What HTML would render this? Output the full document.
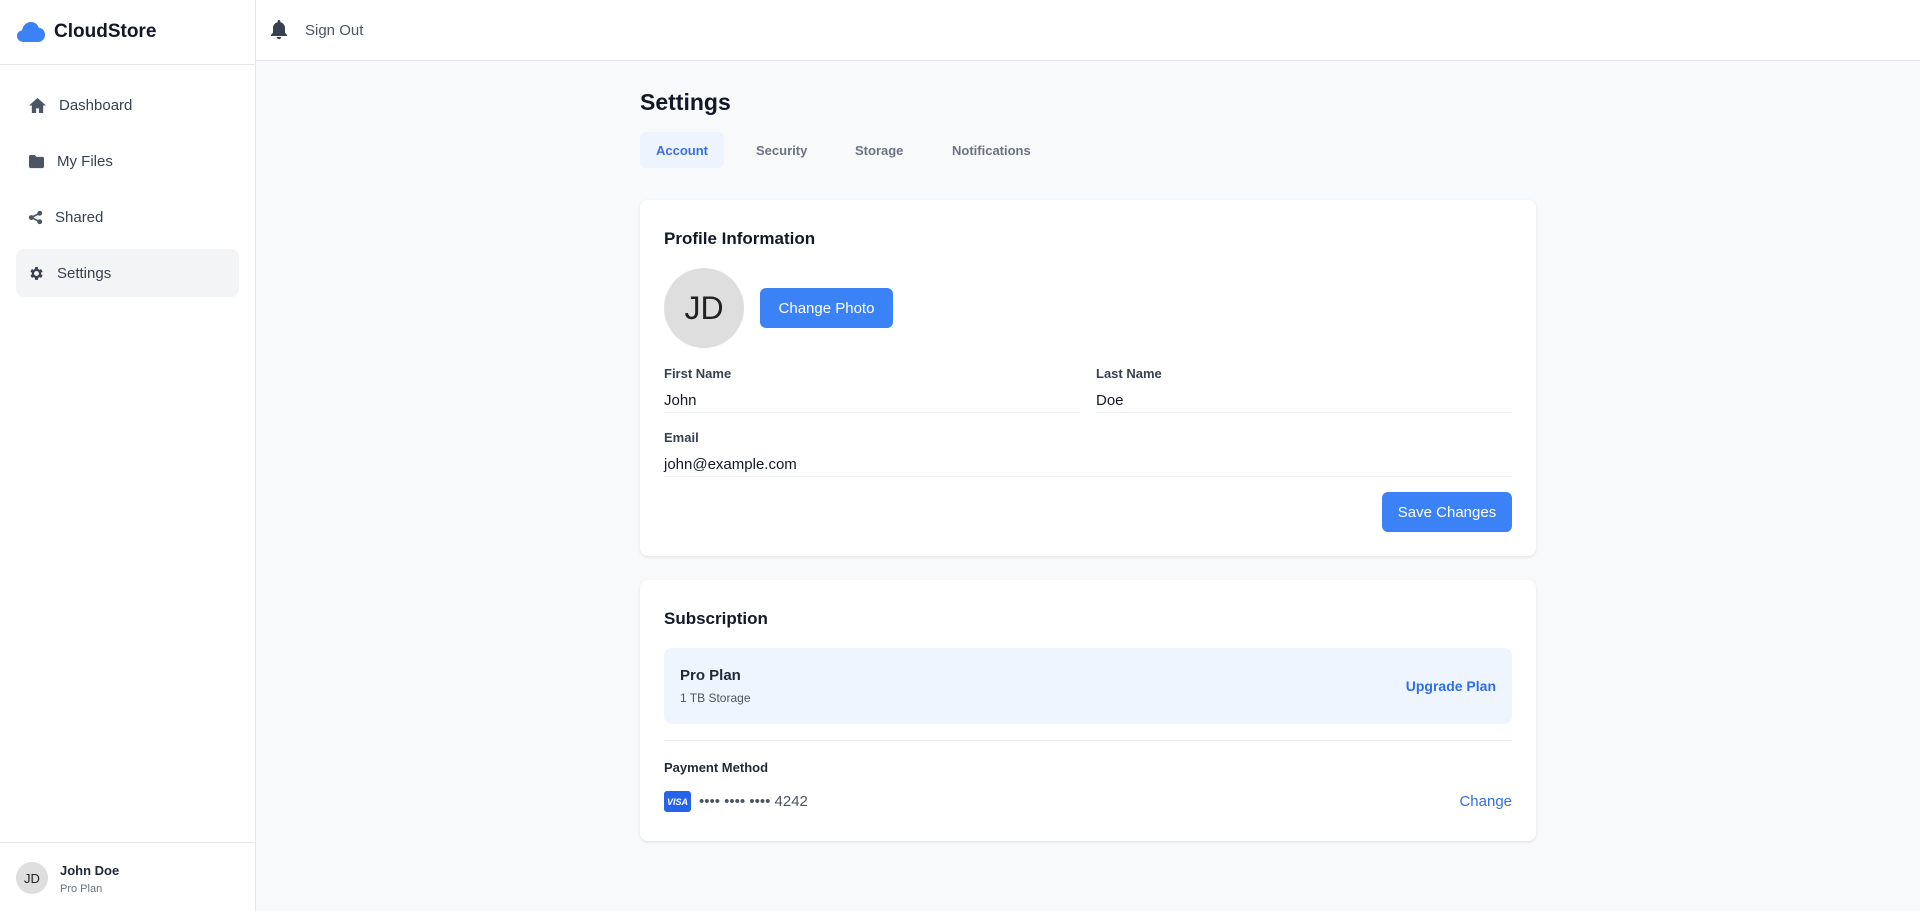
<!DOCTYPE html>
<html><head><meta charset="utf-8"><style>
*{box-sizing:border-box;margin:0;padding:0}
body{width:1920px;height:911px;overflow:hidden;font-family:"Liberation Sans",sans-serif;background:#f8f9fb;color:#111827;position:relative}
.side{position:absolute;left:0;top:0;width:256px;height:911px;background:#fff;border-right:1px solid #e5e7eb}
.logo{height:65px;border-bottom:1px solid #e5e7eb;display:flex;align-items:center;padding-left:16px;font-weight:bold;font-size:19px;color:#111827}
.logo svg{margin-right:8px}
.nav{position:absolute;left:16px;width:223px;height:48px;border-radius:8px;display:flex;align-items:center;padding-left:12px;font-size:15px;color:#374151}
.nav svg{margin-right:12px}
.nav.act{background:#f3f4f6}
.foot{position:absolute;left:0;bottom:0;width:255px;height:69px;border-top:1px solid #e5e7eb}
.av{position:absolute;border-radius:50%;background:#dedede;display:flex;align-items:center;justify-content:center;color:#222}
.top{position:absolute;left:256px;top:0;right:0;height:61px;background:#fff;border-bottom:1px solid #e5e7eb}
.card{position:absolute;left:640px;width:896px;background:#fff;border-radius:8px;box-shadow:0 1px 3px rgba(0,0,0,.1)}
.abs{position:absolute}
.lbl{font-size:13px;font-weight:bold;color:#374151}
.val{font-size:15px;color:#111827}
.line{position:absolute;height:1px;background:#eceef1}
.btn{position:absolute;background:#3b82f6;color:#fff;border-radius:6px;display:flex;align-items:center;justify-content:center;font-size:15px}
</style></head><body>
<div class="side">
 <div class="logo"><svg width="30" height="22" viewBox="0 0 30 22"><path d="M8 21C3.5 21 1 18 1 15c0-3 2.2-5.3 5-5.6C6.8 4.7 10.5 1 15 1c3.8 0 6.8 2.4 7.8 5.8 3.8.3 6.2 3.3 6.2 6.9 0 4-3 7.3-7 7.3z" fill="#3b82f6"/></svg>CloudStore</div>
 <div class="nav" style="top:81px"><svg width="19" height="17" viewBox="0 0 20 18"><path d="M10 1L1 9h3v8h4.5v-5h3v5H16V9h3z" fill="#4b5563"/></svg>Dashboard</div>
 <div class="nav" style="top:137px"><svg width="17" height="15" viewBox="0 0 18 16"><path d="M1 2.5C1 1.7 1.7 1 2.5 1h4.5l2 2h6.5c.8 0 1.5.7 1.5 1.5v9c0 .8-.7 1.5-1.5 1.5h-13C1.7 15 1 14.3 1 13.5z" fill="#4b5563"/></svg>My Files</div>
 <div class="nav" style="top:193px"><svg width="15" height="15" viewBox="0 0 16 16"><circle cx="12.5" cy="3.5" r="2.6" fill="#4b5563"/><circle cx="12.5" cy="12.5" r="2.6" fill="#4b5563"/><circle cx="3.5" cy="8" r="2.6" fill="#4b5563"/><path d="M3.5 8L12.5 3.5M3.5 8l9 4.5" stroke="#4b5563" stroke-width="1.8"/></svg>Shared</div>
 <div class="nav act" style="top:249px"><svg width="17" height="17" viewBox="0 0 24 24"><path fill="#374151" d="M19.4 13a7.5 7.5 0 000-2l2.1-1.6-2-3.5-2.5 1a7.6 7.6 0 00-1.7-1L15 3h-4l-.4 2.9a7.6 7.6 0 00-1.7 1l-2.5-1-2 3.5L6.6 11a7.5 7.5 0 000 2l-2.1 1.6 2 3.5 2.5-1c.5.4 1.1.7 1.7 1L11 21h4l.4-2.9c.6-.3 1.2-.6 1.7-1l2.5 1 2-3.5zM13 15.5a3.5 3.5 0 110-7 3.5 3.5 0 010 7z" transform="translate(-1 0)"/></svg>Settings</div>
 <div class="foot">
  <div class="av" style="left:16px;top:19px;width:32px;height:32px;font-size:13px">JD</div>
  <div class="abs" style="left:60px;top:20px;font-size:13px;font-weight:bold;color:#1f2937">John Doe</div>
  <div class="abs" style="left:60px;top:40px;font-size:11px;color:#6b7280">Pro Plan</div>
 </div>
</div>
<div class="top">
 <svg class="abs" style="left:14px;top:19px" width="18" height="21" viewBox="0 0 18 21"><path d="M9 1c.8 0 1.4.6 1.4 1.4v.8c2.8.6 4.6 3 4.6 5.8v4.5l2 2.5v1H1v-1l2-2.5V9c0-2.8 1.8-5.2 4.6-5.8v-.8C7.6 1.6 8.2 1 9 1zM6.8 18h4.4a2.2 2.2 0 01-4.4 0z" fill="#374151"/></svg>
 <div class="abs" style="left:49px;top:22px;font-size:15px;color:#4b5563">Sign Out</div>
</div>
<div class="abs" style="left:640px;top:89px;font-size:23px;font-weight:bold;color:#111827">Settings</div>
<div class="abs" style="left:640px;top:132px;width:84px;height:36px;background:#eef4fd;border-radius:6px"></div>
<div class="abs" style="left:656px;top:143px;font-size:13px;font-weight:bold;color:#3b6fe0">Account</div>
<div class="abs" style="left:756px;top:143px;font-size:13px;font-weight:bold;color:#6b7280">Security</div>
<div class="abs" style="left:855px;top:143px;font-size:13px;font-weight:bold;color:#6b7280">Storage</div>
<div class="abs" style="left:952px;top:143px;font-size:13px;font-weight:bold;color:#6b7280">Notifications</div>

<div class="card" style="top:200px;height:356px">
 <div class="abs" style="left:24px;top:29px;font-size:17px;font-weight:bold;color:#111827">Profile Information</div>
 <div class="av" style="left:24px;top:68px;width:80px;height:80px;font-size:32px">JD</div>
 <div class="btn" style="left:120px;top:88px;width:133px;height:40px">Change Photo</div>
 <div class="abs lbl" style="left:24px;top:166px">First Name</div>
 <div class="abs val" style="left:24px;top:192px">John</div>
 <div class="line" style="left:24px;top:212px;width:416px"></div>
 <div class="abs lbl" style="left:456px;top:166px">Last Name</div>
 <div class="abs val" style="left:456px;top:192px">Doe</div>
 <div class="line" style="left:456px;top:212px;width:416px"></div>
 <div class="abs lbl" style="left:24px;top:230px">Email</div>
 <div class="abs val" style="left:24px;top:256px">john@example.com</div>
 <div class="line" style="left:24px;top:276px;width:848px"></div>
 <div class="btn" style="left:742px;top:292px;width:130px;height:40px">Save Changes</div>
</div>

<div class="card" style="top:580px;height:261px">
 <div class="abs" style="left:24px;top:29px;font-size:17px;font-weight:bold;color:#111827">Subscription</div>
 <div class="abs" style="left:24px;top:68px;width:848px;height:76px;background:#eef5fe;border-radius:8px">
  <div class="abs" style="left:16px;top:19px;font-size:15px;font-weight:bold;color:#1f2937">Pro Plan</div>
  <div class="abs" style="left:16px;top:43px;font-size:12px;color:#4b5563">1 TB Storage</div>
  <div class="abs" style="right:16px;top:30px;font-size:14px;font-weight:bold;color:#2f6fe4">Upgrade Plan</div>
 </div>
 <div class="line" style="left:24px;top:160px;width:848px;background:#e5e7eb"></div>
 <div class="abs lbl" style="left:24px;top:180px;font-size:13px;color:#1f2937">Payment Method</div>
 <div class="abs" style="left:24px;top:211px;width:27px;height:21px;background:#2563eb;border-radius:3px;color:#fff;font-size:9px;font-weight:bold;font-style:italic;display:flex;align-items:center;justify-content:center">VISA</div>
 <div class="abs" style="left:59px;top:213px;font-size:15px;color:#4b5563">•••• •••• •••• 4242</div>
 <div class="abs" style="right:24px;top:213px;font-size:15px;color:#2f6fe4">Change</div>
</div>
</body></html>
